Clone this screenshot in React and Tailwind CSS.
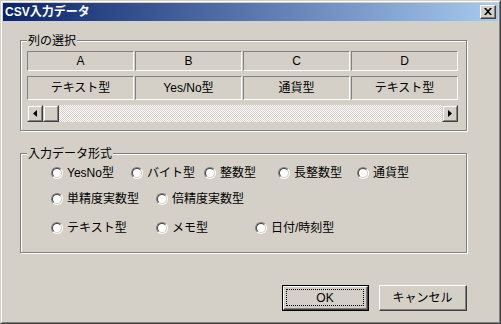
import React from "react";

const FONT = "font-['Liberation_Sans','Noto_Sans_CJK_JP',sans-serif]";

function Radio({ label, w }) {
  return (
    <div className={`flex items-center h-[16px] ${w || ""}`}>
      <div className="w-[12px] h-[12px] rounded-full border border-t-[#808080] border-l-[#808080] border-b-white border-r-white shrink-0">
        <div className="w-[10px] h-[10px] rounded-full border border-t-[#404040] border-l-[#404040] border-b-[#d4d0c8] border-r-[#d4d0c8] bg-white" />
      </div>
      <span className="ml-[4px] text-[12px] leading-[16px] text-black whitespace-nowrap">{label}</span>
    </div>
  );
}

function Cell({ children, h }) {
  return (
    <div className={`w-[107px] ${h} border border-t-[#808080] border-l-[#808080] border-b-white border-r-white flex items-center justify-center text-[12px] text-black`}>
      {children}
    </div>
  );
}

function ScrollBtn({ dir }) {
  return (
    <div className="w-[16px] h-[17px] border border-t-[#d4d0c8] border-l-[#d4d0c8] border-r-[#404040] border-b-[#404040] bg-[#d4d0c8] shrink-0">
      <div className="w-full h-full border border-t-white border-l-white border-r-[#808080] border-b-[#808080] flex items-center justify-center">
        {dir === "left" && (
          <svg width="4" height="7" viewBox="0 0 4 7"><path d="M4 0 L4 7 L0 3.5 Z" fill="#000" /></svg>
        )}
        {dir === "right" && (
          <svg width="4" height="7" viewBox="0 0 4 7"><path d="M0 0 L0 7 L4 3.5 Z" fill="#000" /></svg>
        )}
      </div>
    </div>
  );
}

function Group({ label, h, mt, children }) {
  return (
    <div className={`w-[447px] ${h} ${mt} border border-[#808080] shadow-[1px_1px_0_#fff,inset_1px_1px_0_#fff] flex flex-col`}>
      <div className="-mt-[7px] ml-[6px] self-start px-px bg-[#d4d0c8] text-[12px] leading-[14px] text-black">{label}</div>
      {children}
    </div>
  );
}

export default function App() {
  return (
    <div className={`w-[501px] h-[324px] border border-t-[#d4d0c8] border-l-[#d4d0c8] border-r-[#404040] border-b-[#404040] bg-[#d4d0c8] ${FONT}`}>
      <div className="w-full h-full border border-t-white border-l-white border-r-[#808080] border-b-[#808080] p-px flex flex-col">
        {/* Title bar */}
        <div className="h-[18px] flex items-center justify-between bg-[linear-gradient(to_right,#0a246a,#a6caf0)] pl-[2px] pr-[2px]">
          <span className="text-white font-bold text-[12px] leading-[14px]">CSV入力データ</span>
          <div className="w-[16px] h-[14px] border border-t-white border-l-white border-r-[#404040] border-b-[#404040] bg-[#d4d0c8]">
            <div className="w-full h-full border-r border-b border-r-[#808080] border-b-[#808080] flex items-center justify-center">
              <svg width="8" height="7" viewBox="0 0 8 7">
                <path d="M0 0h2l2 2.2L6 0h2L5 3.5 8 7H6L4 4.8 2 7H0l3-3.5z" fill="#000" />
              </svg>
            </div>
          </div>
        </div>

        {/* Body */}
        <div className="flex flex-col pl-[17px]">
          <Group label="列の選択" h="h-[91px]" mt="mt-[19px]">
            <div className="flex flex-col pl-[6px] mt-[3px]">
              <div className="flex gap-px">
                <Cell h="h-[20px]">A</Cell>
                <Cell h="h-[20px]">B</Cell>
                <Cell h="h-[20px]">C</Cell>
                <Cell h="h-[20px]">D</Cell>
              </div>
              <div className="flex gap-px mt-[5px]">
                <Cell h="h-[24px]">テキスト型</Cell>
                <Cell h="h-[24px]">Yes/No型</Cell>
                <Cell h="h-[24px]">通貨型</Cell>
                <Cell h="h-[24px]">テキスト型</Cell>
              </div>
              <div className="flex w-[431px] h-[17px] mt-[5px]">
                <ScrollBtn dir="left" />
                <ScrollBtn />
                <div className="flex-1 bg-[repeating-conic-gradient(#ffffff_0_25%,#d4d0c8_0_50%)] bg-[length:2px_2px]" />
                <ScrollBtn dir="right" />
              </div>
            </div>
          </Group>

          <Group label="入力データ形式" h="h-[100px]" mt="mt-[22px]">
            <div className="flex flex-col pl-[30px]">
              <div className="flex mt-[4px]">
                <Radio label="YesNo型" w="w-[80px]" />
                <Radio label="バイト型" w="w-[73px]" />
                <Radio label="整数型" w="w-[74px]" />
                <Radio label="長整数型" w="w-[79px]" />
                <Radio label="通貨型" />
              </div>
              <div className="flex mt-[10px]">
                <Radio label="単精度実数型" w="w-[105px]" />
                <Radio label="倍精度実数型" />
              </div>
              <div className="flex mt-[13px]">
                <Radio label="テキスト型" w="w-[105px]" />
                <Radio label="メモ型" w="w-[99px]" />
                <Radio label="日付/時刻型" />
              </div>
            </div>
          </Group>

          <div className="flex w-[447px] justify-end gap-[10px] mt-[32px]">
            <div className="w-[87px] h-[26px] border border-black">
              <div className="w-full h-full border border-t-white border-l-white border-r-[#404040] border-b-[#404040]">
                <div className="w-full h-full border-r border-b border-r-[#808080] border-b-[#808080] p-[2px]">
                  <div className="w-full h-full border border-dotted border-black flex items-center justify-center text-[12px] text-black">OK</div>
                </div>
              </div>
            </div>
            <div className="w-[88px] h-[26px] border border-t-white border-l-white border-r-[#404040] border-b-[#404040]">
              <div className="w-full h-full border-r border-b border-r-[#808080] border-b-[#808080] flex items-center justify-center text-[12px] text-black">キャンセル</div>
            </div>
          </div>
        </div>
      </div>
    </div>
  );
}
